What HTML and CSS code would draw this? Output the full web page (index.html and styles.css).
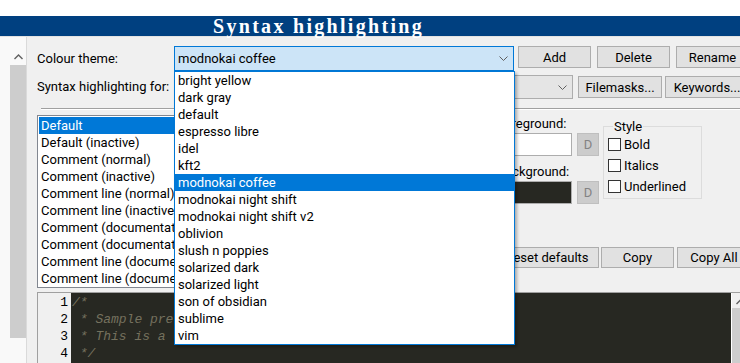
FILE: index.html
```html
<!DOCTYPE html>
<html lang="en">

<head>
	<meta charset="UTF-8">
	<meta name="viewport" content="width=device-width, initial-scale=1.0">
	<title>Syntax highlighting</title>
	<link rel="stylesheet" href="styles.css">
</head>

<body>

	<div class="topstrip"></div>
	<div class="titlebar">Syntax highlighting</div>

	<div class="window">

		<!-- left pane with its scrollbar -->
		<div class="sidepane">
			<div class="vbar">
				<svg class="uparrow" width="9" height="6" viewBox="0 0 9 6">
					<polyline points="0.5,5 4.5,1 8.5,5" fill="none" stroke="#606060" stroke-width="1.4" />
				</svg>
				<div class="thumb"></div>
			</div>
		</div>

		<div class="panel">

			<div class="row">
				<label class="label">Colour theme:</label>
				<div class="combo combo-open">
					<span>modnokai coffee</span>
					<svg width="9" height="5" viewBox="0 0 9 5">
						<polyline points="0.5,0.5 4.5,4.5 8.5,0.5" fill="none" stroke="#606060" stroke-width="1" />
					</svg>

					<!-- open dropdown list -->
					<ul class="dropdown">
						<li>bright yellow</li>
						<li>dark gray</li>
						<li>default</li>
						<li>espresso libre</li>
						<li>idel</li>
						<li>kft2</li>
						<li class="sel">modnokai coffee</li>
						<li>modnokai night shift</li>
						<li>modnokai night shift v2</li>
						<li>oblivion</li>
						<li>slush n poppies</li>
						<li>solarized dark</li>
						<li>solarized light</li>
						<li>son of obsidian</li>
						<li>sublime</li>
						<li>vim</li>
					</ul>
				</div>
				<button class="btn btn-add">Add</button>
				<button class="btn btn-gap">Delete</button>
				<button class="btn btn-gap">Rename</button>
			</div>

			<div class="row row-lexer">
				<label class="label label-lexer">Syntax highlighting for:</label>
				<div class="combo combo-lexer">
					<span>C/C++</span>
					<svg width="9" height="5" viewBox="0 0 9 5">
						<polyline points="0.5,0.5 4.5,4.5 8.5,0.5" fill="none" stroke="#606060" stroke-width="1" />
					</svg>
				</div>
				<button class="btn btn-wide btn-filemasks">Filemasks...</button>
				<button class="btn btn-wide btn-keywords">Keywords...</button>
			</div>

			<hr class="sep">

			<div class="styles">
				<ul class="listbox">
					<li class="sel">Default</li>
					<li>Default (inactive)</li>
					<li>Comment (normal)</li>
					<li>Comment (inactive)</li>
					<li>Comment line (normal)</li>
					<li>Comment line (inactive)</li>
					<li>Comment (documentation)</li>
					<li>Comment (documentation, inactive)</li>
					<li>Comment line (documentation)</li>
					<li>Comment line (documentation, inactive)</li>
				</ul>

				<div class="props">
					<div class="colours">
						<div class="clabel">Foreground:</div>
						<div class="swatchrow">
							<span class="swatch swatch-fg"></span>
							<button class="dbtn" disabled>D</button>
						</div>
						<div class="clabel">Background:</div>
						<div class="swatchrow">
							<span class="swatch swatch-bg"></span>
							<button class="dbtn" disabled>D</button>
						</div>
					</div>

					<div class="stylebox">
						<span class="legend">Style</span>
						<div class="check"><span class="box"></span>Bold</div>
						<div class="check"><span class="box"></span>Italics</div>
						<div class="check"><span class="box"></span>Underlined</div>
					</div>

					<div class="actions">
						<button class="btn btn-reset">Reset defaults</button>
						<button class="btn btn-copy">Copy</button>
						<button class="btn btn-copyall">Copy All</button>
					</div>
				</div>
			</div>

			<!-- preview editor -->
			<div class="editor">
				<div class="gutter">1<br>2<br>3<br>4</div>
				<pre class="code">/*
 * Sample preview of the selected theme
 * This is a comment block
 */</pre>
				<div class="escroll">
					<svg class="uparrow" width="9" height="6" viewBox="0 0 9 6">
						<polyline points="0.5,5 4.5,1 8.5,5" fill="none" stroke="#606060" stroke-width="1.4" />
					</svg>
					<div class="ethumb"></div>
				</div>
			</div>

		</div>
	</div>

</body>

</html>
```

FILE: styles.css
```css
body {
	margin: 0;
	width: 740px;
	height: 363px;
	overflow: hidden;
	background-color: #fff;
	font-family: Roboto, "Liberation Sans", sans-serif;
	font-size: 13px;
	color: #000;
}

.topstrip {
	height: 16px;
}

.titlebar {
	height: 20px;
	padding-left: 213px;
	background-color: #004080;
	color: #fff;
	font: bold 20px/20px "Liberation Serif", serif;
	letter-spacing: 2.3px;
	white-space: nowrap;
}

.window {
	display: flex;
	height: 326px;
	border-top: 1px solid #e2e2e2;
	background-color: #f0f0f0;
	overflow: hidden;
}

/* left pane */
.sidepane {
	flex: none;
	width: 26px;
	background-color: #f9f9f9;
	border-right: 1px solid #dadada;
}

.vbar {
	margin-left: 10px;
	width: 16px;
	padding-top: 17px;
}

.uparrow {
	display: block;
	margin: 0 auto;
}

.thumb {
	margin-top: 5px;
	height: 273px;
	background-color: #cdcdcd;
}

.panel {
	flex: 1;
	min-width: 0;
	padding: 9px 0 0 10px;
}

.row {
	display: flex;
	align-items: flex-start;
}

.label {
	flex: none;
	width: 137px;
	line-height: 25px;
}

.row-lexer {
	margin-top: 4px;
}

.label-lexer {
	line-height: 24px;
}

.combo {
	position: relative;
	flex: none;
	box-sizing: border-box;
	display: flex;
	align-items: center;
	justify-content: space-between;
	width: 340px;
	height: 25px;
	padding: 0 5px 0 3px;
	border: 1px solid #0078d7;
	background-color: #cce4f7;
}

.combo-lexer {
	width: 399px;
	height: 24px;
	border-color: #adadad;
	background-color: #e5e5e5;
}

.dropdown {
	position: absolute;
	top: 24px;
	left: -1px;
	z-index: 5;
	box-sizing: border-box;
	width: 341px;
	margin: 0;
	padding: 0;
	list-style: none;
	border: 1px solid #0078d7;
	background-color: #fff;
	box-shadow: 2px 2px 3px rgba(0, 0, 0, 0.3);
}

.dropdown li {
	line-height: 17px;
	padding-left: 3px;
	white-space: nowrap;
}

.sel {
	background-color: #0078d7;
	color: #fff;
}

.btn {
	flex: none;
	box-sizing: border-box;
	width: 73px;
	height: 22px;
	padding: 0;
	border: 1px solid #adadad;
	background-color: #e1e1e1;
	font: inherit;
	color: #000;
	white-space: nowrap;
}

.btn-add {
	margin-left: 4px;
}

.btn-gap {
	margin-left: 6px;
}

.btn-wide {
	width: 84px;
	margin-top: 1px;
}

.btn-filemasks {
	margin-left: 5px;
}

.btn-keywords {
	margin-left: 3px;
}

.sep {
	height: 0;
	margin: 9px 0 5px 4px;
	border: 0;
	border-top: 1px solid #a0a0a0;
	border-bottom: 1px solid #fff;
}

.styles {
	display: flex;
	align-items: flex-start;
}

.listbox {
	flex: none;
	box-sizing: border-box;
	width: 453px;
	height: 173px;
	margin: 0;
	padding: 1px;
	list-style: none;
	border: 1px solid #828790;
	background-color: #fff;
	overflow: hidden;
}

.listbox li {
	line-height: 17px;
	padding-left: 2px;
	white-space: nowrap;
}

.props {
	flex: none;
	display: grid;
	grid-template-columns: 104px 99px;
	grid-template-rows: 132px auto;
	column-gap: 4px;
	margin-left: 5px;
}

.colours {
	padding-left: 2px;
}

.clabel {
	line-height: 17px;
}

.swatchrow {
	display: flex;
	margin: 1px 0 7px;
}

.swatch {
	box-sizing: border-box;
	width: 75px;
	height: 23px;
	border: 1px solid #adadad;
}

.swatch-fg {
	background-color: #fff;
}

.swatch-bg {
	background-color: #272822;
}

.dbtn {
	box-sizing: border-box;
	width: 22px;
	height: 23px;
	margin-left: 5px;
	padding: 0;
	border: 1px solid #bfbfbf;
	background-color: #cccccc;
	font: inherit;
	color: #838383;
}

.stylebox {
	position: relative;
	box-sizing: border-box;
	height: 73px;
	margin-top: 11px;
	padding: 7px 0 0 4px;
	border: 1px solid #dcdcdc;
}

.legend {
	position: absolute;
	top: -9px;
	left: 9px;
	padding: 0 1px;
	line-height: 17px;
	background-color: #f0f0f0;
}

.check {
	display: flex;
	align-items: center;
	height: 21px;
}

.box {
	box-sizing: border-box;
	width: 13px;
	height: 13px;
	margin-right: 3px;
	border: 1px solid #333;
	background-color: #fff;
}

.actions {
	grid-column: 1 / span 2;
	display: flex;
}

.actions .btn {
	height: 21px;
}

.btn-reset {
	width: 104px;
}

.btn-copy {
	margin-left: 2px;
}

.btn-copyall {
	width: 74px;
	margin-left: 3px;
}

/* preview editor */
.editor {
	display: flex;
	width: 712px;
	height: 80px;
	margin-top: 4px;
	border-top: 1px solid #a0a0a0;
	border-left: 1px solid #a0a0a0;
}

.gutter {
	flex: none;
	box-sizing: border-box;
	width: 33px;
	padding: 1px 3px 0 0;
	text-align: right;
	background-color: #f0f0f0;
	font: 13px/17px "Liberation Mono", monospace;
}

.code {
	flex: none;
	width: 660px;
	margin: 0;
	padding: 1px 0 0 1px;
	box-sizing: border-box;
	background-color: #272822;
	color: #75715e;
	font: italic 13px/17px "Liberation Mono", monospace;
}

.escroll {
	flex: none;
	width: 17px;
	padding-top: 6px;
	border-left: 1px solid #fff;
	box-sizing: border-box;
	background-color: #f0f0f0;
}

.ethumb {
	margin-top: 3px;
	height: 60px;
	background-color: #cdcdcd;
}
```
